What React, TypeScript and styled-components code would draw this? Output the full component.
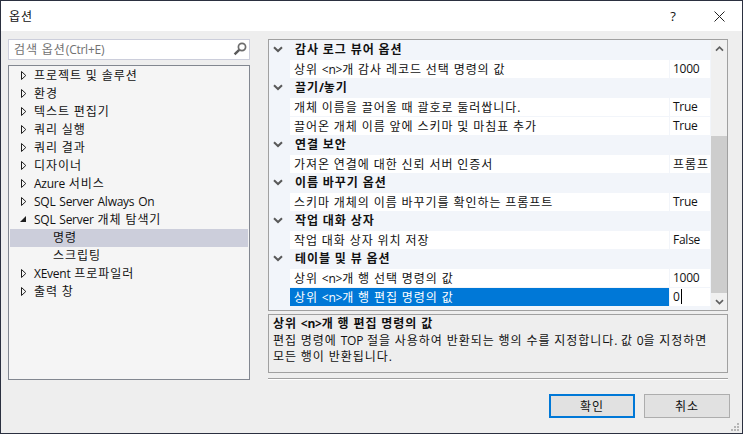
import React from 'react';
import styled, { createGlobalStyle } from 'styled-components';

const Global = createGlobalStyle`
  html, body { margin: 0; padding: 0; background: #eeeeee; }
  body { width: 743px; height: 434px; overflow: hidden; font-family: "Open Sans", "Noto Sans CJK KR", sans-serif; font-size: 12px; color: #111; }
  * { box-sizing: border-box; }
`;
const FONT = `"Open Sans", "Noto Sans CJK KR", sans-serif`;

const Ko = styled.span` letter-spacing: 0.95px; `;
const T = ({ children }: { children: string }) => (
  <>
    {children.split(/([가-힣]+)/).map((part, i) =>
      /[가-힣]/.test(part) ? <Ko key={i}>{part}</Ko> : part
    )}
  </>
);

const Win = styled.div`
  width: 743px; height: 434px; display: flex; flex-direction: column;
  background: #eeeeee; border: 1px solid #2b3040; font-family: ${FONT}; letter-spacing: -0.25px; word-spacing: 1px;
`;
const TitleBar = styled.div`
  height: 30px; background: #fff; display: flex; align-items: center; padding-left: 8px; flex: none;
`;
const Title = styled.div` flex: 1; font-size: 12px; `;
const TitleBtn = styled.div`
  width: 46px; height: 30px; display: flex; align-items: center; justify-content: center; font-size: 13px;
`;
const Body = styled.div`
  flex: none; display: flex; gap: 18px; padding: 8px 14px 0 7px;
`;
const Left = styled.div` width: 242px; flex: none; display: flex; flex-direction: column; gap: 5px; `;
const Search = styled.div`
  height: 21px; background: #fff; border: 1px solid #ccceDB; display: flex; align-items: center; justify-content: space-between;
  padding: 0 2px 1px 5px; color: #717171; font-size: 12px;
`;
const Tree = styled.div`
  height: 315px; background: #f5f5f5; border: 1px solid #828790; padding: 1px;
`;
const TreeRow = styled.div<{ $sel?: boolean; $child?: boolean }>`
  height: 18px; display: flex; align-items: center; white-space: nowrap; padding-bottom: 2px;
  padding-left: ${p => (p.$child ? '43px' : '11px')};
  background: ${p => (p.$sel ? '#ccceDB' : 'transparent')};
`;
const Twisty = styled.span` width: 13px; flex: none; display: flex; align-items: center; `;
const Right = styled.div` width: 460px; flex: none; display: flex; flex-direction: column; `;
const Grid = styled.div`
  height: 272px; border: 1px solid #a0a0a0; display: flex; background: #f2f5fa; flex: none;
`;
const Rows = styled.div` flex: 1; min-width: 0; `;
const Cat = styled.div`
  height: 19px; display: flex; align-items: center; font-weight: 700; white-space: nowrap; padding-bottom: 1px;
`;
const CatIcon = styled.span` width: 26px; flex: none; display: flex; padding-left: 4px; `;
const Prop = styled.div`
  height: 19px; margin-left: 21px; display: flex; padding-top: 1px; background: #f2f5fa;
`;
const PropName = styled.div<{ $sel?: boolean }>`
  width: 379px; flex: none; padding: 0 0 1px 4px; display: flex; align-items: center; white-space: pre;
  background: ${p => (p.$sel ? '#0078d7' : '#fff')}; color: ${p => (p.$sel ? '#fff' : 'inherit')};
`;
const PropVal = styled.div`
  flex: 1; min-width: 0; margin-left: 1px; padding: 0 0 1px 3px; background: #fff; display: flex; align-items: center; white-space: nowrap; overflow: hidden;
`;
const Caret = styled.span` width: 1px; height: 15px; background: #000; margin-left: 1px; `;
const Scroll = styled.div`
  width: 16px; flex: none; background: #f0f0f0; display: flex; flex-direction: column; margin-left: 1px;
`;
const ScrollBtn = styled.div` height: 17px; flex: none; display: flex; align-items: center; justify-content: center; `;
const Track = styled.div` flex: 1; display: flex; flex-direction: column; padding-top: 79px; `;
const Thumb = styled.div` height: 157px; background: #cdcdcd; `;
const Desc = styled.div`
  height: 59px; margin-top: 3px; border: 1px solid #a0a0a0; padding: 1px 4px; line-height: 16px; flex: none;
`;
const DescTitle = styled.div` font-weight: 700; margin-bottom: 1px; white-space: nowrap; `;
const DescLine = styled.div` white-space: nowrap; `;
const Sep = styled.div` height: 2px; margin-top: 5px; background: #a0a0a0; border-bottom: 1px solid #fff; flex: none; `;
const Footer = styled.div`
  flex: 1; display: flex; justify-content: flex-end; gap: 9px; padding: 14px 12px 0 0; position: relative;
`;
const Btn = styled.div<{ $primary?: boolean }>`
  width: 86px; height: 24px; background: #e1e1e1; display: flex; align-items: center; justify-content: center; padding-bottom: 1px;
  border: ${p => (p.$primary ? '2px solid #0078d7' : '1px solid #adadad')};
`;
const Grip = styled.svg` position: absolute; right: 2px; bottom: 1px; `;
const OpenSvg = styled.svg` margin-left: -1px; `;

const Closed = () => (
  <svg width="6" height="9" viewBox="0 0 6 9"><path d="M0.5 0.5 L4.8 4.5 L0.5 8.5 Z" fill="#f5f5f5" stroke="#1e1e1e" /></svg>
);
const Open = () => (
  <OpenSvg width="6" height="6" viewBox="0 0 6 6"><path d="M0 6 L6 0 L6 6 Z" fill="#1e1e1e" /></OpenSvg>
);
const Chevron = () => (
  <svg width="10" height="7" viewBox="0 0 10 7"><path d="M1 1.2 L5 5 L9 1.2" fill="none" stroke="#595959" strokeWidth="2" /></svg>
);
const tree = ['프로젝트 및 솔루션', '환경', '텍스트 편집기', '쿼리 실행', '쿼리 결과', '디자이너', 'Azure 서비스', 'SQL Server Always On'];
const groups: [string, [string, string][]][] = [
  ['감사 로그 뷰어 옵션', [['상위 <n>개 감사 레코드 선택 명령의 값', '1000']]],
  ['끌기/놓기', [['개체 이름을 끌어올 때 괄호로 둘러쌉니다.', 'True'], ['끌어온 개체 이름 앞에 스키마 및 마침표 추가', 'True']]],
  ['연결 보안', [['가져온 연결에 대한 신뢰 서버 인증서', '프롬프']]],
  ['이름 바꾸기 옵션', [['스키마 개체의 이름 바꾸기를 확인하는 프롬프트', 'True']]],
  ['작업 대화 상자', [['작업 대화 상자 위치 저장', 'False']]],
];

export default function App() {
  return (
    <Win>
      <Global />
      <TitleBar>
        <Title><T>옵션</T></Title>
        <TitleBtn>?</TitleBtn>
        <TitleBtn>
          <svg width="11" height="11" viewBox="0 0 11 11"><path d="M0.5 0.5 L10.5 10.5 M10.5 0.5 L0.5 10.5" stroke="#222" strokeWidth="1" /></svg>
        </TitleBtn>
      </TitleBar>
      <Body>
        <Left>
          <Search>
            <span><T>검색 옵션(Ctrl+E)</T></span>
            <svg width="14" height="14" viewBox="0 0 14 14">
              <circle cx="9" cy="5" r="3.6" fill="none" stroke="#6d6d6d" strokeWidth="1.7" />
              <path d="M6.2 7.8 L1.6 12.4" stroke="#5a5a5a" strokeWidth="2.4" />
            </svg>
          </Search>
          <Tree>
            {tree.map(t => <TreeRow key={t}><Twisty><Closed /></Twisty><span><T>{t}</T></span></TreeRow>)}
            <TreeRow><Twisty><Open /></Twisty><span><T>SQL Server 개체 탐색기</T></span></TreeRow>
            <TreeRow $child $sel><T>명령</T></TreeRow>
            <TreeRow $child><T>스크립팅</T></TreeRow>
            <TreeRow><Twisty><Closed /></Twisty><span><T>XEvent 프로파일러</T></span></TreeRow>
            <TreeRow><Twisty><Closed /></Twisty><span><T>출력 창</T></span></TreeRow>
          </Tree>
        </Left>
        <Right>
          <Grid>
            <Rows>
              {groups.map(([c, ps]) => (
                <React.Fragment key={c}>
                  <Cat><CatIcon><Chevron /></CatIcon><span><T>{c}</T></span></Cat>
                  {ps.map(([n, v]) => (
                    <Prop key={n}><PropName><span><T>{n}</T></span></PropName><PropVal><span><T>{v}</T></span></PropVal></Prop>
                  ))}
                </React.Fragment>
              ))}
              <Cat><CatIcon><Chevron /></CatIcon><span><T>테이블 및 뷰 옵션</T></span></Cat>
              <Prop><PropName><span><T>{'상위 <n>개 행 선택 명령의 값'}</T></span></PropName><PropVal>1000</PropVal></Prop>
              <Prop><PropName $sel><span><T>{'상위 <n>개 행 편집 명령의 값'}</T></span></PropName><PropVal>0<Caret /></PropVal></Prop>
            </Rows>
            <Scroll>
              <ScrollBtn><svg width="9" height="6" viewBox="0 0 9 6"><path d="M1 4.6 L4.5 1.2 L8 4.6" fill="none" stroke="#606060" strokeWidth="1.7" /></svg></ScrollBtn>
              <Track><Thumb /></Track>
              <ScrollBtn><svg width="9" height="6" viewBox="0 0 9 6"><path d="M1 1.2 L4.5 4.6 L8 1.2" fill="none" stroke="#606060" strokeWidth="1.7" /></svg></ScrollBtn>
            </Scroll>
          </Grid>
          <Desc>
            <DescTitle><T>{'상위 <n>개 행 편집 명령의 값'}</T></DescTitle>
            <DescLine><T>편집 명령에 TOP 절을 사용하여 반환되는 행의 수를 지정합니다. 값 0을 지정하면</T></DescLine>
            <DescLine><T>모든 행이 반환됩니다.</T></DescLine>
          </Desc>
          <Sep />
        </Right>
      </Body>
      <Footer>
        <Btn $primary><T>확인</T></Btn>
        <Btn><T>취소</T></Btn>
        <Grip width="10" height="10" viewBox="0 0 10 10" fill="#b5b5b5">
          <rect x="7" y="1" width="2" height="2" /><rect x="4" y="4" width="2" height="2" /><rect x="7" y="4" width="2" height="2" />
          <rect x="1" y="7" width="2" height="2" /><rect x="4" y="7" width="2" height="2" /><rect x="7" y="7" width="2" height="2" />
        </Grip>
      </Footer>
    </Win>
  );
}
